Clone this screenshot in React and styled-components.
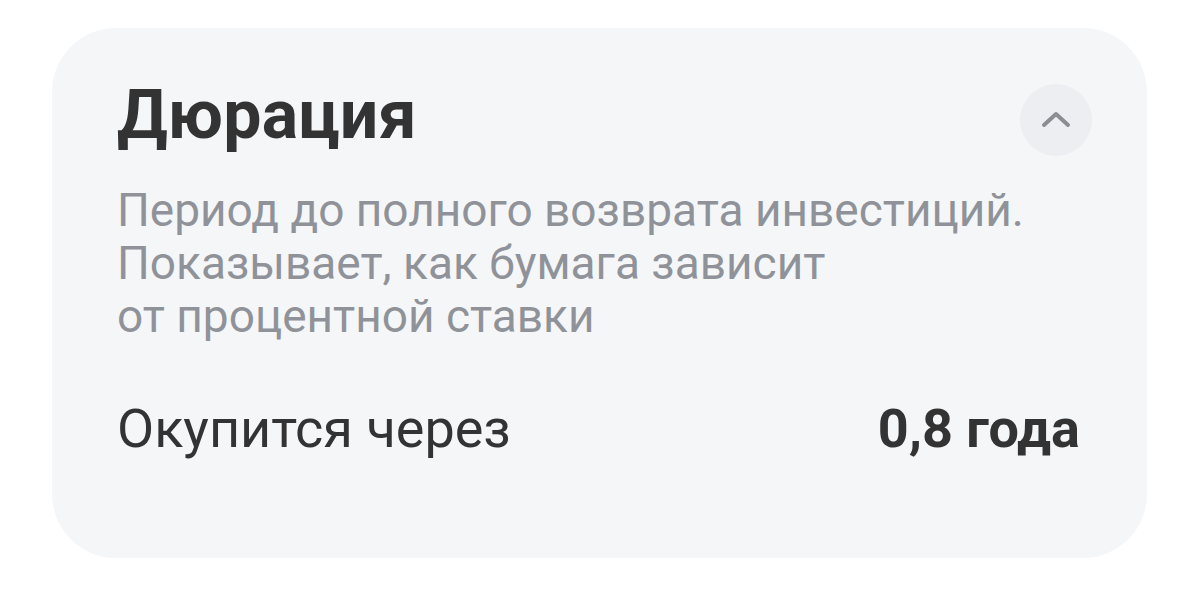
import styled, { createGlobalStyle } from 'styled-components';

const GlobalStyle = createGlobalStyle`
  html, body {
    margin: 0;
    padding: 0;
    background: #ffffff;
  }
  body {
    font-family: Roboto, "Noto Sans", Arial, sans-serif;
    -webkit-font-smoothing: antialiased;
  }
`;

const Page = styled.div`
  padding: 28px 0 0 52px;
`;

const Card = styled.section`
  box-sizing: border-box;
  width: 1095px;
  height: 530px;
  padding: 47px 67px 0 65px;
  border-radius: 64px;
  background: #f5f6f8;
`;

const Header = styled.div`
  display: flex;
  justify-content: space-between;
  align-items: flex-start;
`;

const Title = styled.h2`
  margin: 0;
  font-size: 68px;
  line-height: 80px;
  font-weight: 700;
  color: #333333;
  letter-spacing: 0.2px;
`;

const ToggleButton = styled.button`
  display: flex;
  align-items: center;
  justify-content: center;
  width: 72px;
  height: 72px;
  margin: 9px -12px 0 0;
  padding: 0;
  border: none;
  border-radius: 50%;
  background: #eceef1;
  cursor: pointer;
`;

const Description = styled.p`
  margin: 28px 0 0;
  font-size: 46px;
  line-height: 53px;
  font-weight: 400;
  color: #8f9399;
`;

const Row = styled.div`
  display: flex;
  justify-content: space-between;
  align-items: baseline;
  margin-top: 55px;
`;

const Label = styled.span`
  font-size: 54px;
  line-height: 62px;
  color: #333333;
`;

const Value = styled.span`
  font-size: 54px;
  line-height: 62px;
  font-weight: 700;
  color: #333333;
`;

function ChevronUp() {
  return (
    <svg width="32" height="20" viewBox="0 0 32 20" fill="none">
      <path
        d="M4 15 L16 4 L28 15"
        stroke="#8a8d92"
        strokeWidth="4"
        strokeLinecap="round"
        strokeLinejoin="round"
      />
    </svg>
  );
}

export default function App() {
  return (
    <>
      <GlobalStyle />
      <Page>
        <Card>
          <Header>
            <Title>Дюрация</Title>
            <ToggleButton aria-label="Свернуть">
              <ChevronUp />
            </ToggleButton>
          </Header>
          <Description>
            Период до полного возврата инвестиций.
            <br />
            Показывает, как бумага зависит
            <br />
            от процентной ставки
          </Description>
          <Row>
            <Label>Окупится через</Label>
            <Value>0,8 года</Value>
          </Row>
        </Card>
      </Page>
    </>
  );
}
